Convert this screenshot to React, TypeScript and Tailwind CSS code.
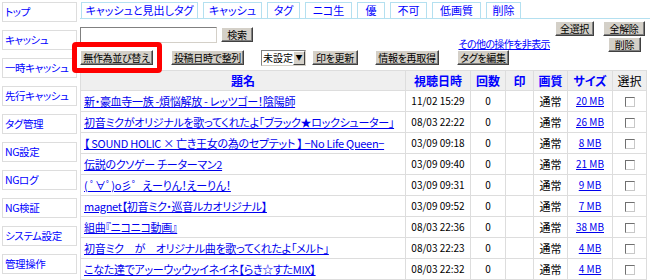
import React from "react";

const nav = ["トップ", "キャッシュ", "一時キャッシュ", "先行キャッシュ", "タグ管理", "NG設定", "NGログ", "NG検証", "システム設定", "管理操作"];

const tabs: { t: string; w: string }[] = [
  { t: "キャッシュと見出しタグ", w: "w-[117px]" },
  { t: "キャッシュ", w: "w-[59px]" },
  { t: "タグ", w: "w-[33px]" },
  { t: "ニコ生", w: "w-[47px]" },
  { t: "優", w: "w-[28px]" },
  { t: "不可", w: "w-[37px]" },
  { t: "低画質", w: "w-[49px]" },
  { t: "削除", w: "w-[35px]" },
];

const rows = [
  ["新・豪血寺一族 -煩悩解放 - レッツゴー！陰陽師", "11/02 15:29", "20 MB"],
  ["初音ミクがオリジナルを歌ってくれたよ「ブラック★ロックシューター」", "08/03 22:22", "26 MB"],
  ["【 SOUND HOLIC × 亡き王女の為のセプテット 】 −No Life Queen−", "03/09 09:18", "8 MB"],
  ["伝説のクソゲー チーターマン2", "03/09 09:40", "21 MB"],
  ["( ﾟ∀ﾟ)o彡゜えーりん！えーりん！", "03/09 09:31", "9 MB"],
  ["magnet【初音ミク・巡音ルカオリジナル】", "03/09 09:52", "7 MB"],
  ["組曲『ニコニコ動画』", "08/03 22:36", "38 MB"],
  ["初音ミク　が　オリジナル曲を歌ってくれたよ「メルト」", "08/03 22:23", "4 MB"],
  ["こなた達でアッーウッウッイネイネ【らき☆すたMIX】", "08/03 22:32", "4 MB"],
];

function Btn({ children, w }: { children: React.ReactNode; w: string }) {
  return (
    <div
      className={`${w} h-[15px] flex items-center justify-center bg-[#d4d0c8] border border-t-[#ffffff] border-l-[#ffffff] border-r-[#404040] border-b-[#404040] shadow-[inset_-1px_-1px_0_#808080] text-[10px] tracking-[-0.3px] leading-none text-black whitespace-nowrap`}
    >
      {children}
    </div>
  );
}

function Check() {
  return <span className="inline-block w-[10px] h-[10px] border border-t-[#707070] border-l-[#707070] border-r-[#c8c8c8] border-b-[#c8c8c8] bg-white align-middle" />;
}

export default function App() {
  return (
    <div className="w-[650px] h-[280px] overflow-hidden bg-white flex font-['Noto_Sans_CJK_JP',sans-serif] [font-feature-settings:'palt'] text-[11px] leading-none">
      <div className="w-[80px] shrink-0 flex flex-col gap-[8px] pt-[2px] pl-[2px] pr-[3px]">
        {nav.map((n) => (
          <div key={n} className="h-[20px] shrink-0 border border-[#dddddd] bg-white flex items-center pl-[2px] text-[#0000ff] text-[10.5px] tracking-[-0.4px] whitespace-nowrap overflow-hidden">
            {n}
          </div>
        ))}
      </div>
      <div className="flex-1 flex flex-col">
        <div className="h-[22px] pt-[2px] pl-[1px] flex gap-[5px] border-b border-[#b4e0f0]">
          {tabs.map((t) => (
            <div key={t.t} className={`${t.w} h-full border border-b-0 border-[#b4e0f0] flex items-center justify-center text-[#0000ff] text-[11px] whitespace-nowrap`}>
              {t.t}
            </div>
          ))}
        </div>
        <div className="h-[31px] flex justify-between">
          <div className="mt-[8px] flex items-start gap-[4px] h-[16px]">
            <div className="w-[137px] h-[16px] border border-t-[#808080] border-l-[#808080] border-r-[#d4d0c8] border-b-[#d4d0c8] bg-white" />
            <Btn w="w-[32px]">検索</Btn>
          </div>
          <div className="flex flex-col items-end pr-[5px]">
            <div className="mt-[2px] flex gap-[9px]">
              <Btn w="w-[39px]">全選択</Btn>
              <Btn w="w-[42px]">全解除</Btn>
            </div>
            <div className="mt-[1px] flex items-start">
              <span className="text-[#0000ff] underline text-[10px] leading-[11px] tracking-[-0.6px] mr-[58px] mt-[1px] whitespace-nowrap">その他の操作を非表示</span>
              <div className="mr-[4px]">
                <Btn w="w-[33px]">削除</Btn>
              </div>
            </div>
          </div>
        </div>
        <div className="h-[15px] flex items-center">
          <div className="relative">
            <Btn w="w-[73px]">無作為並び替え</Btn>
            <span className="absolute -left-[8px] -top-[8px] -right-[9px] -bottom-[8px] border-[5px] border-[#ff0000] rounded-[4px]" />
          </div>
          <div className="ml-[18px]">
            <Btn w="w-[73px]">投稿日時で整列</Btn>
          </div>
          <div className="ml-[17px] w-[45px] h-[16px] flex border border-t-[#808080] border-l-[#808080] border-r-[#d4d0c8] border-b-[#d4d0c8] bg-white">
            <span className="flex-1 text-[10px] text-black flex items-center pl-[1px] whitespace-nowrap">未設定</span>
            <span className="w-[13px] h-full bg-[#d4d0c8] border border-t-white border-l-white border-r-[#404040] border-b-[#404040] flex items-center justify-center text-[7px] text-black">▼</span>
          </div>
          <div className="ml-[6px]">
            <Btn w="w-[46px]">印を更新</Btn>
          </div>
          <div className="ml-[17px]">
            <Btn w="w-[64px]">情報を再取得</Btn>
          </div>
          <div className="ml-[18px]">
            <Btn w="w-[52px]">タグを編集</Btn>
          </div>
        </div>
        <table className="mt-[5px] w-[566px] border-collapse table-fixed">
          <colgroup>
            <col className="w-[325px]" />
            <col className="w-[65px]" />
            <col className="w-[35px]" />
            <col className="w-[28px]" />
            <col className="w-[34px]" />
            <col className="w-[45px]" />
            <col className="w-[34px]" />
          </colgroup>
          <thead>
            <tr className="h-[20px] bg-[#efefef] text-[12px] font-bold">
              <th className="border border-[#dddddd] text-[#0000ff]">題名</th>
              <th className="border border-[#dddddd] text-[#0000ff]">視聴日時</th>
              <th className="border border-[#dddddd] text-[#0000ff]">回数</th>
              <th className="border border-[#dddddd] text-[#0000ff]">印</th>
              <th className="border border-[#dddddd] text-[#0000ff]">画質</th>
              <th className="border border-[#dddddd] text-[#0000ff]">サイズ</th>
              <th className="border border-[#dddddd] text-black font-normal">選択</th>
            </tr>
          </thead>
          <tbody>
            {rows.map((r, i) => (
              <tr key={i} className="h-[21px]">
                <td className="border border-[#dddddd] pl-[3px] whitespace-nowrap overflow-hidden">
                  <span className="text-[#0000ee] underline text-[11px] tracking-[-0.3px]">{r[0]}</span>
                </td>
                <td className="border border-[#dddddd] text-center text-[10px] text-black whitespace-nowrap">{r[1]}</td>
                <td className="border border-[#dddddd] text-center text-[10px] text-black">0</td>
                <td className="border border-[#dddddd]" />
                <td className="border border-[#dddddd] text-center text-[11px] text-black">通常</td>
                <td className="border border-[#dddddd] text-center text-[10px]">
                  <span className="text-[#0000ee] underline">{r[2]}</span>
                </td>
                <td className="border border-[#dddddd] text-center">
                  <Check />
                </td>
              </tr>
            ))}
          </tbody>
        </table>
      </div>
    </div>
  );
}
